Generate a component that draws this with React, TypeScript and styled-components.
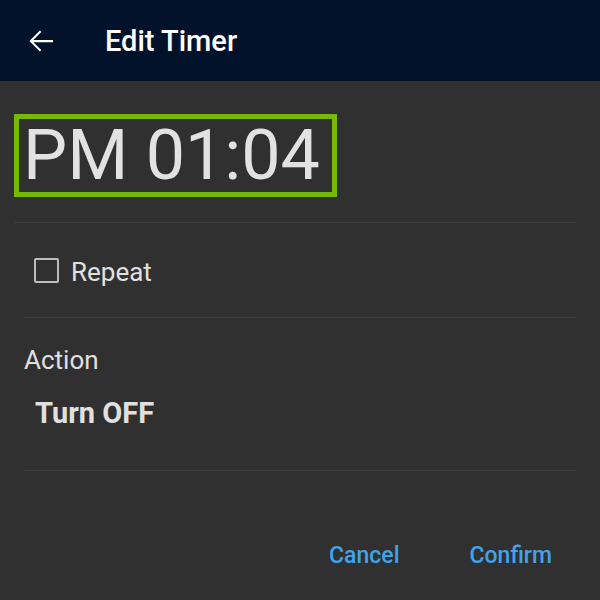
import styled, { createGlobalStyle } from "styled-components";

const GlobalStyle = createGlobalStyle`
  body {
    margin: 0;
    background: #303030;
    font-family: Roboto, "Liberation Sans", sans-serif;
  }
`;

const Screen = styled.div`
  width: 600px;
  height: 600px;
  background: #303030;
  display: flex;
  flex-direction: column;
  overflow: hidden;
`;

const Header = styled.header`
  height: 81px;
  background: #03122b;
  display: flex;
  align-items: center;
  padding-left: 23px;
  gap: 46px;
`;

const BackButton = styled.button`
  width: 36px;
  height: 36px;
  padding: 0;
  border: none;
  background: none;
  color: #ffffff;
  display: flex;
  cursor: pointer;
`;

const Title = styled.h1`
  margin: 0;
  font-size: 29px;
  font-weight: 500;
  color: #ffffff;
  line-height: 34px;
`;

const Body = styled.main`
  padding: 0 24px;
  display: flex;
  flex-direction: column;
`;

const TimeSection = styled.div`
  padding: 33px 0 25px;
  margin-left: -10px;
  border-bottom: 1px solid #3e3e3e;
`;

const TimeBox = styled.div`
  display: inline-block;
  border: 5px solid #76b900;
  padding: 0 12px 0 4px;
  font-size: 70px;
  line-height: 73px;
  font-weight: 400;
  color: #e2e2e2;
`;

const SectionRow = styled.label`
  height: 94px;
  display: flex;
  align-items: center;
  gap: 12px;
  padding-left: 10px;
  border-bottom: 1px solid #3e3e3e;
  cursor: pointer;
`;

const CheckBox = styled.span<{ checked: boolean }>`
  width: 25px;
  height: 25px;
  box-sizing: border-box;
  border: 2.5px solid #bdbdbd;
  border-radius: 2px;
  background: ${({ checked }) => (checked ? "#bdbdbd" : "transparent")};
`;

const RowLabel = styled.span`
  font-size: 26px;
  line-height: 32px;
  color: #e0e0e0;
  margin-top: 3px;
`;

const ActionSection = styled.div`
  padding: 27px 0 40px;
  border-bottom: 1px solid #3e3e3e;
  display: flex;
  flex-direction: column;
`;

const FieldLabel = styled.div`
  font-size: 26px;
  line-height: 31px;
  color: #e0e0e0;
`;

const FieldValue = styled.div`
  margin: 20px 0 0 11px;
  font-size: 29px;
  line-height: 34px;
  font-weight: 700;
  color: #e0e0e0;
`;

const Actions = styled.div`
  display: flex;
  justify-content: flex-end;
  gap: 70px;
  padding: 71px 24px 0 0;
`;

const TextButton = styled.button`
  border: none;
  background: none;
  padding: 0;
  font-family: inherit;
  font-size: 23px;
  line-height: 28px;
  font-weight: 500;
  color: #42a3ea;
  cursor: pointer;
`;

const App = () => {
  return (
    <>
      <GlobalStyle />
      <Screen>
        <Header>
          <BackButton aria-label="Back">
            <svg width="36" height="36" viewBox="0 0 24 24" fill="currentColor">
              <path d="M20 11.25H6.9l5.3-5.3-.95-.95L4.25 12l7 7 .95-.95-5.3-5.3H20z" />
            </svg>
          </BackButton>
          <Title>Edit Timer</Title>
        </Header>
        <Body>
          <TimeSection>
            <TimeBox>PM 01:04</TimeBox>
          </TimeSection>
          <SectionRow>
            <CheckBox checked={false} />
            <RowLabel>Repeat</RowLabel>
          </SectionRow>
          <ActionSection>
            <FieldLabel>Action</FieldLabel>
            <FieldValue>Turn OFF</FieldValue>
          </ActionSection>
          <Actions>
            <TextButton>Cancel</TextButton>
            <TextButton>Confirm</TextButton>
          </Actions>
        </Body>
      </Screen>
    </>
  );
};

export default App;
